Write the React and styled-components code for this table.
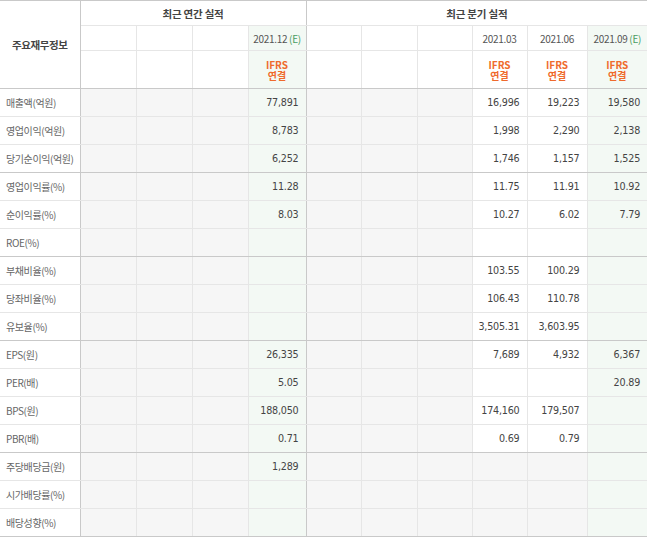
import * as React from 'react';
import styled, { createGlobalStyle } from 'styled-components';

const GlobalStyle = createGlobalStyle`
  html, body {
    margin: 0;
    padding: 0;
    background: #fff;
  }
`;

const COLORS = {
  gray: '#f6f6f6',
  green: '#f3f9f4',
  white: '#fff',
};

const WIDTHS = [80, 56, 56, 56, 58, 55, 56, 55, 55, 60, 60];

const ROWS = [
  { label: '매출액(억원)', annual: '77,891', q: ['16,996', '19,223', '19,580'] },
  { label: '영업이익(억원)', annual: '8,783', q: ['1,998', '2,290', '2,138'] },
  { label: '당기순이익(억원)', annual: '6,252', q: ['1,746', '1,157', '1,525'], end: true },
  { label: '영업이익률(%)', annual: '11.28', q: ['11.75', '11.91', '10.92'] },
  { label: '순이익률(%)', annual: '8.03', q: ['10.27', '6.02', '7.79'] },
  { label: 'ROE(%)', annual: '', q: ['', '', ''], end: true },
  { label: '부채비율(%)', annual: '', q: ['103.55', '100.29', ''] },
  { label: '당좌비율(%)', annual: '', q: ['106.43', '110.78', ''] },
  { label: '유보율(%)', annual: '', q: ['3,505.31', '3,603.95', ''], end: true },
  { label: 'EPS(원)', annual: '26,335', q: ['7,689', '4,932', '6,367'] },
  { label: 'PER(배)', annual: '5.05', q: ['', '', '20.89'] },
  { label: 'BPS(원)', annual: '188,050', q: ['174,160', '179,507', ''] },
  { label: 'PBR(배)', annual: '0.71', q: ['0.69', '0.79', ''], end: true },
  { label: '주당배당금(원)', annual: '1,289', q: ['', '', ''], muted: true },
  { label: '시가배당률(%)', annual: '', q: ['', '', ''], muted: true },
  { label: '배당성향(%)', annual: '', q: ['', '', ''], muted: true, end: true },
];

const STable = styled.table`
  width: 647px;
  table-layout: fixed;
  border-collapse: collapse;
  border-top: 1px solid #c9c9c9;
  font-family: 'Noto Sans CJK KR', 'Noto Sans', sans-serif;
`;

const STitle = styled.th`
  font-size: 10.5px;
  font-weight: 600;
  color: #444;
  letter-spacing: -0.4px;
  text-align: center;
  vertical-align: middle;
  padding: 0;
  background: #fff;
  border-right: 1px solid #c9c9c9;
  border-bottom: 1px solid #c9c9c9;
`;

const SGroupHead = styled.th`
  height: 24px;
  padding: 0;
  font-size: 10.5px;
  font-weight: 600;
  color: #444;
  letter-spacing: -0.2px;
  text-align: center;
  background: #fff;
  border-bottom: 1px solid #e6e6e6;
  border-right: ${({ last }) => (last ? 'none' : '1px solid #c9c9c9')};
`;

const SPeriod = styled.th`
  height: 24px;
  padding: 0;
  font-size: 10px;
  font-weight: 400;
  color: #555;
  letter-spacing: -0.3px;
  text-align: center;
  white-space: nowrap;
  background: ${({ tone }) => COLORS[tone]};
  border-bottom: 1px solid #e6e6e6;
  border-right: ${({ divider }) => (divider ? '1px solid #c9c9c9' : '1px solid #e6e6e6')};

  & em {
    font-style: normal;
    color: #4a9d62;
  }
`;

const SIfrs = styled.th`
  height: 37px;
  padding: 0;
  font-size: 10px;
  line-height: 11px;
  font-weight: 600;
  color: #ef6a2c;
  text-align: center;
  background: ${({ tone }) => COLORS[tone]};
  border-bottom: 1px solid #c9c9c9;
  border-right: ${({ divider }) => (divider ? '1px solid #c9c9c9' : '1px solid #e6e6e6')};
`;

const SLabel = styled.th`
  height: 27px;
  padding: 0 0 0 6px;
  font-size: 10px;
  font-weight: 400;
  color: #666;
  letter-spacing: -0.4px;
  text-align: left;
  white-space: nowrap;
  background: #fff;
  border-right: 1px solid #c9c9c9;
  border-bottom: 1px solid ${({ end }) => (end ? '#c9c9c9' : '#e6e6e6')};
`;

const SValue = styled.td`
  height: 27px;
  padding: 0 7px 0 0;
  font-family: 'DejaVu Sans', 'Noto Sans', sans-serif;
  font-size: 9.6px;
  color: #444;
  letter-spacing: -0.2px;
  text-align: right;
  white-space: nowrap;
  background: ${({ tone }) => COLORS[tone]};
  border-bottom: 1px solid ${({ end }) => (end ? '#c9c9c9' : '#e6e6e6')};
  border-right: ${({ divider }) => (divider ? '1px solid #c9c9c9' : '1px solid #e6e6e6')};
`;

const Period = ({ date, estimate, ...rest }) => (
  <SPeriod {...rest}>
    {date && (
      <>
        {date}
        {estimate && <em> (E)</em>}
      </>
    )}
  </SPeriod>
);

const Ifrs = ({ show, ...rest }) => (
  <SIfrs {...rest}>
    {show && (
      <>
        IFRS
        <br />
        연결
      </>
    )}
  </SIfrs>
);

const FinanceRow = ({ row }) => {
  const { label, annual, q, end, muted } = row;
  return (
    <tr>
      <SLabel end={end}>{label}</SLabel>
      <SValue tone="gray" end={end} />
      <SValue tone="gray" end={end} />
      <SValue tone="gray" end={end} />
      <SValue tone="green" end={end} divider>
        {annual}
      </SValue>
      <SValue tone="gray" end={end} />
      <SValue tone="gray" end={end} />
      <SValue tone="gray" end={end} />
      <SValue tone={muted ? 'gray' : 'white'} end={end}>
        {q[0]}
      </SValue>
      <SValue tone={muted ? 'gray' : 'white'} end={end}>
        {q[1]}
      </SValue>
      <SValue tone="green" end={end} style={{ borderRight: 'none' }}>
        {q[2]}
      </SValue>
    </tr>
  );
};

const App = () => (
  <>
    <GlobalStyle />
    <STable>
      <colgroup>
        {WIDTHS.map((w, i) => (
          <col key={i} style={{ width: w }} />
        ))}
      </colgroup>
      <thead>
        <tr>
          <STitle rowSpan={3}>주요재무정보</STitle>
          <SGroupHead colSpan={4}>최근 연간 실적</SGroupHead>
          <SGroupHead colSpan={6} last>
            최근 분기 실적
          </SGroupHead>
        </tr>
        <tr>
          <Period tone="white" />
          <Period tone="white" />
          <Period tone="white" />
          <Period tone="green" date="2021.12" estimate divider />
          <Period tone="white" />
          <Period tone="white" />
          <Period tone="white" />
          <Period tone="white" date="2021.03" />
          <Period tone="white" date="2021.06" />
          <Period tone="green" date="2021.09" estimate style={{ borderRight: 'none' }} />
        </tr>
        <tr>
          <Ifrs tone="white" />
          <Ifrs tone="white" />
          <Ifrs tone="white" />
          <Ifrs tone="green" show divider />
          <Ifrs tone="white" />
          <Ifrs tone="white" />
          <Ifrs tone="white" />
          <Ifrs tone="white" show />
          <Ifrs tone="white" show />
          <Ifrs tone="green" show style={{ borderRight: 'none' }} />
        </tr>
      </thead>
      <tbody>
        {ROWS.map((row) => (
          <FinanceRow key={row.label} row={row} />
        ))}
      </tbody>
    </STable>
  </>
);

export default App;
